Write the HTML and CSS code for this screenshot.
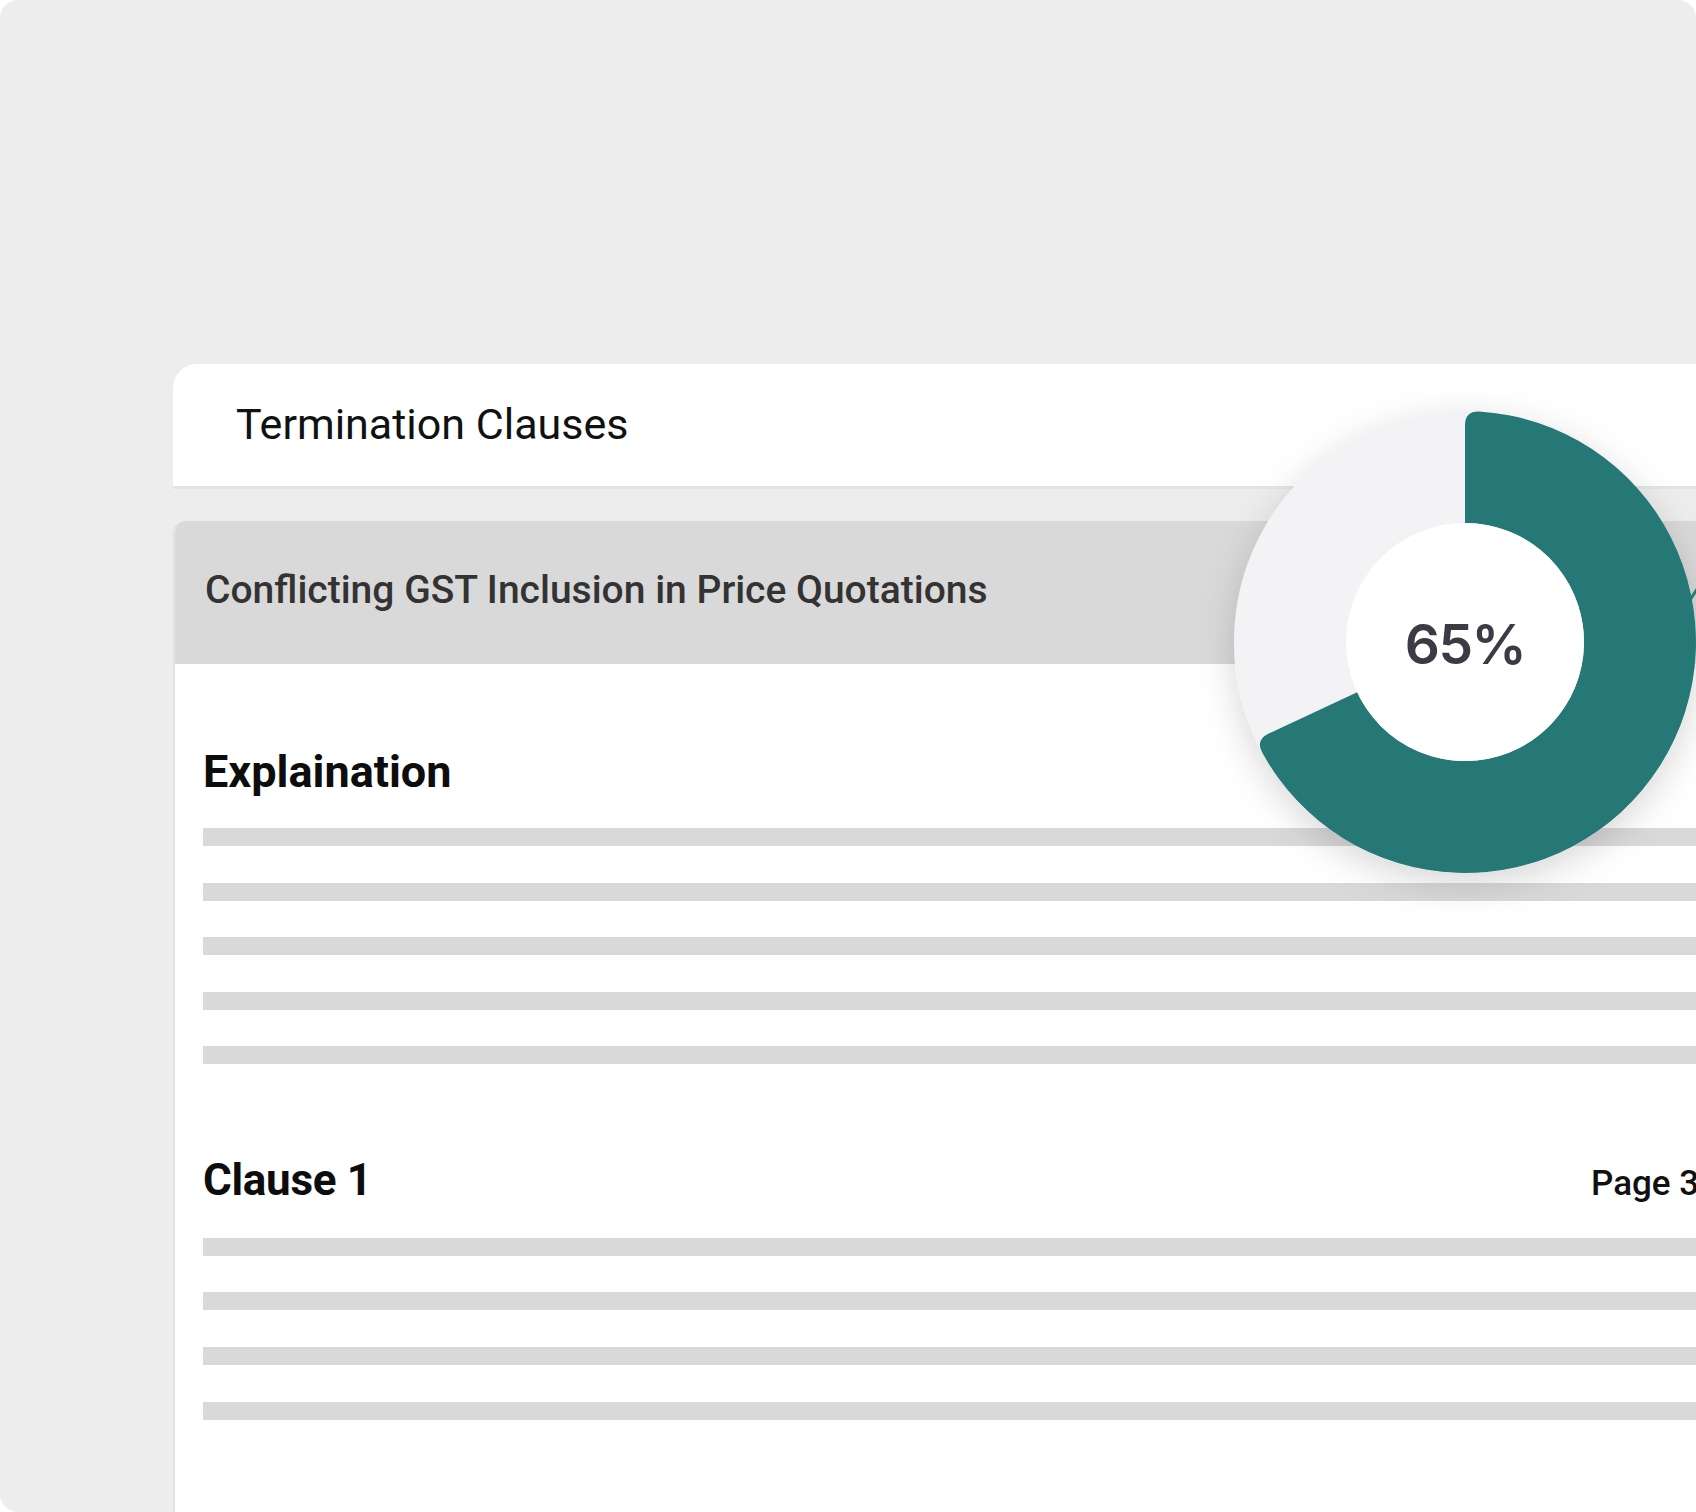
FILE: index.html
```html
<!DOCTYPE html>
<html lang="en">
<head>
<meta charset="utf-8">
<title>Termination Clauses</title>
<link rel="stylesheet" href="styles.css">
</head>
<body>
<div class="frame">
  <div class="card">
    <div class="header">Termination Clauses</div>
    <div class="panel">
      <div class="band"><span class="band-text">Conflicting GST Inclusion in Price Quotations</span></div>
      <div class="body">
        <h2 class="section-title">Explaination</h2>
        <div class="lines">
          <div class="line"></div>
          <div class="line"></div>
          <div class="line"></div>
          <div class="line"></div>
          <div class="line"></div>
        </div>
        <div class="clause-head">
          <h2 class="section-title clause-title">Clause 1</h2>
          <span class="page">Page 3</span>
        </div>
        <div class="lines clause-lines">
          <div class="line"></div>
          <div class="line"></div>
          <div class="line"></div>
          <div class="line"></div>
        </div>
      </div>
    </div>
  </div>
  <svg class="donut" width="560" height="560" viewBox="0 0 560 560" aria-label="65%">
    <defs>
      <filter id="sh" x="-30%" y="-30%" width="160%" height="160%">
        <feDropShadow dx="0" dy="10" stdDeviation="18" flood-color="#000" flood-opacity="0.16"/>
      </filter>
    </defs>
    <g transform="translate(280 280)">
      <circle r="231" fill="#f3f3f5" filter="url(#sh)"/>
      <path fill="#267877" d="M0 -119 L0 -217 Q0 -231 13.98 -230.58 A231 231 0 1 1 -203.07 110.12 Q-209.36 97.62 -196.67 91.71 L-107.85 50.29 A119 119 0 1 0 0 -119 Z"/>
      <circle r="119" fill="#ffffff"/>
      <line x1="225" y1="-42" x2="234" y2="-56" stroke="#267877" stroke-width="3"/>
      <text class="pct" x="0" y="22" text-anchor="middle">65%</text>
    </g>
  </svg>
</div>
</body>
</html>
```

FILE: styles.css
```css
html, body {
  margin: 0;
  padding: 0;
  background: #ffffff;
}

.frame {
  position: relative;
  width: 1696px;
  height: 1512px;
  box-sizing: border-box;
  padding: 364px 0 0 173px;
  background: #ededed;
  border-radius: 18px;
  overflow: hidden;
}

.card {
  width: 1600px;
}

.header {
  height: 125px;
  box-sizing: border-box;
  padding: 35px 0 0 63px;
  background: #ffffff;
  border-top-left-radius: 24px;
  border-bottom: 3px solid #e4e4e4;
  font-family: Roboto, "Liberation Sans", sans-serif;
  font-weight: 400;
  font-size: 43px;
  line-height: 50px;
  color: #111111;
}

.panel {
  margin-top: 32px;
  height: 1000px;
  background: #ffffff;
  border-left: 2px solid #e2e2e2;
  border-top-left-radius: 12px;
  overflow: hidden;
}

.band {
  height: 143px;
  box-sizing: border-box;
  padding: 46px 0 0 30px;
  background: #d9d9d9;
  font-family: Roboto, "Liberation Sans", sans-serif;
  font-weight: 500;
  font-size: 39px;
  line-height: normal;
  color: #333333;
  white-space: nowrap;
}

.band-text {
  display: inline-block;
}

.body {
  padding: 82px 0 0 28px;
}

.section-title {
  margin: 0;
  font-family: Roboto, "Liberation Sans", sans-serif;
  font-weight: 700;
  font-size: 45px;
  line-height: 52px;
  color: #0d0d0d;
}

.clause-title {
  font-size: 44px;
  letter-spacing: -0.3px;
}

.lines {
  display: flex;
  flex-direction: column;
  gap: 36.6px;
  margin-top: 30px;
}

.line {
  height: 18px;
  background: #d9d9d9;
}

.clause-head {
  display: grid;
  grid-template-columns: 1388px auto;
  align-items: baseline;
  margin-top: 90px;
}

.page {
  font-family: Roboto, "Liberation Sans", sans-serif;
  font-weight: 500;
  font-size: 35px;
  color: #111111;
  white-space: nowrap;
}

.clause-lines {
  margin-top: 31.5px;
}

.donut {
  position: absolute;
  left: 1185px;
  top: 362px;
  overflow: visible;
}

.pct {
  font-family: Inter, Lato, "Noto Sans", sans-serif;
  font-weight: 600;
  font-size: 55px;
  letter-spacing: -1.5px;
  fill: #3b3b45;
}
```
